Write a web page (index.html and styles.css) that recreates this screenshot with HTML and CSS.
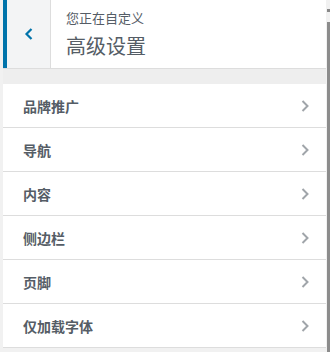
FILE: index.html
```html
<!DOCTYPE html>
<html lang="zh">
<head>
<meta charset="utf-8">
<link rel="stylesheet" href="styles.css">
</head>
<body>
<div class="panel">
  <div class="header">
    <button class="back" aria-label="返回">
      <svg width="10" height="14" viewBox="0 0 10 14"><path d="M7.5 2 L2.5 7 L7.5 12" fill="none" stroke="#0073aa" stroke-width="2.2"/></svg>
    </button>
    <div class="titles">
      <div class="sub">您正在自定义</div>
      <div class="title">高级设置</div>
    </div>
  </div>
  <div class="gap"></div>
  <ul class="list">
    <li><span>品牌推广</span><svg class="chev" width="10" height="14" viewBox="0 0 10 14"><path d="M2.5 2 L7.5 7 L2.5 12" fill="none" stroke="#a0a5aa" stroke-width="2"/></svg></li>
    <li><span>导航</span><svg class="chev" width="10" height="14" viewBox="0 0 10 14"><path d="M2.5 2 L7.5 7 L2.5 12" fill="none" stroke="#a0a5aa" stroke-width="2"/></svg></li>
    <li><span>内容</span><svg class="chev" width="10" height="14" viewBox="0 0 10 14"><path d="M2.5 2 L7.5 7 L2.5 12" fill="none" stroke="#a0a5aa" stroke-width="2"/></svg></li>
    <li><span>侧边栏</span><svg class="chev" width="10" height="14" viewBox="0 0 10 14"><path d="M2.5 2 L7.5 7 L2.5 12" fill="none" stroke="#a0a5aa" stroke-width="2"/></svg></li>
    <li><span>页脚</span><svg class="chev" width="10" height="14" viewBox="0 0 10 14"><path d="M2.5 2 L7.5 7 L2.5 12" fill="none" stroke="#a0a5aa" stroke-width="2"/></svg></li>
    <li><span>仅加载字体</span><svg class="chev" width="10" height="14" viewBox="0 0 10 14"><path d="M2.5 2 L7.5 7 L2.5 12" fill="none" stroke="#a0a5aa" stroke-width="2"/></svg></li>
  </ul>
</div>
<div class="scroll-mark"></div>
<div class="scroll-thumb"></div>
</body>
</html>
```
FILE: styles.css
```css
html, body {
  margin: 0;
  padding: 0;
}
body {
  width: 330px;
  height: 352px;
  background: #f1f1f1;
  font-family: "Noto Sans CJK SC", "Noto Sans", sans-serif;
  color: #555d66;
  overflow: hidden;
  position: relative;
}
.panel {
  margin-left: 3px;
  width: 323px;
  background: #eee;
}
.header {
  display: flex;
  height: 68px;
  background: #fff;
  border-bottom: 1px solid #ddd;
}
.back {
  width: 48px;
  height: 68px;
  padding: 0;
  margin: 0;
  border: none;
  border-left: 4px solid #0073aa;
  border-right: 1px solid #ddd;
  background: #f3f4f5;
  display: flex;
  align-items: center;
  justify-content: center;
}
.titles {
  padding: 9px 0 0 15px;
}
.sub {
  font-size: 13px;
  line-height: 18px;
  color: #555d66;
}
.title {
  font-size: 20px;
  line-height: 28px;
  margin-top: 5px;
  color: #555d66;
}
.gap {
  height: 15px;
}
.list {
  list-style: none;
  margin: 0;
  padding: 0;
}
.list li {
  display: flex;
  align-items: center;
  justify-content: space-between;
  height: 43px;
  background: #fff;
  border-bottom: 1px solid #ddd;
  padding: 0 16px 0 20px;
  font-size: 14px;
  font-weight: 700;
  color: #555d66;
}
.chev {
  display: block;
}
.scroll-mark {
  position: absolute;
  right: 0;
  top: 9px;
  width: 3px;
  height: 3px;
  background: #888;
}
.scroll-thumb {
  position: absolute;
  right: 0;
  top: 22px;
  width: 3px;
  bottom: 0;
  background: #8c8c8c;
}
```
